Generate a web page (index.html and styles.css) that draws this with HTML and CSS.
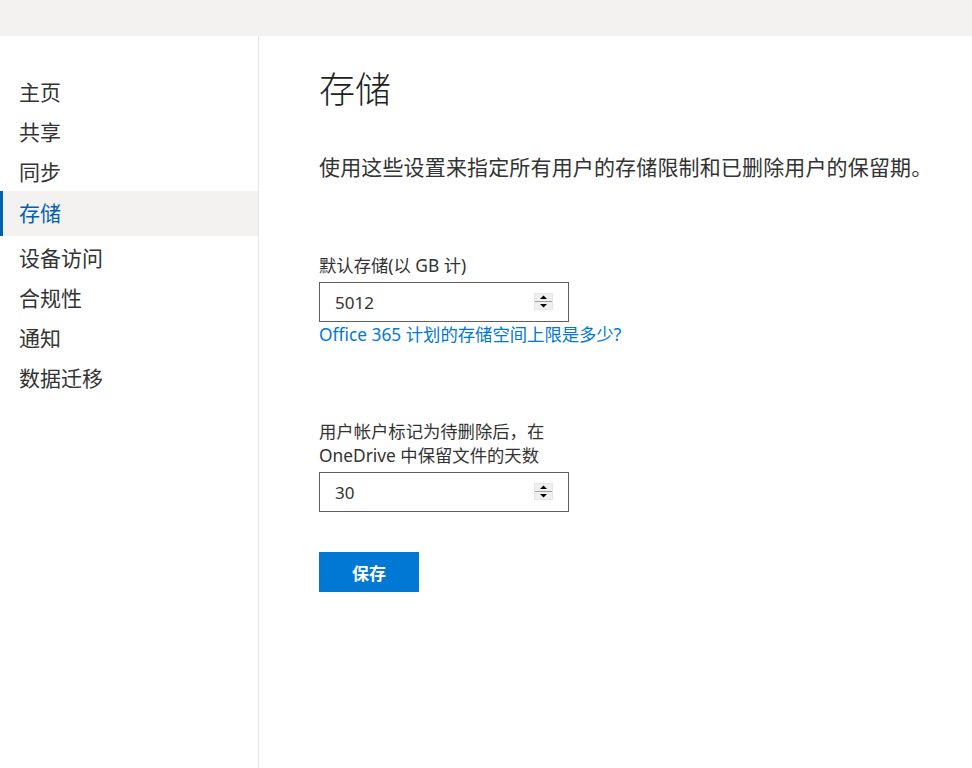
FILE: index.html
```html
<!DOCTYPE html>
<html lang="zh-CN">
<head>
<meta charset="utf-8">
<title>存储</title>
<link rel="stylesheet" href="styles.css">
</head>
<body>
<div class="topbar"></div>
<div class="layout">
  <nav class="sidebar">
    <a class="nav-item">主页</a>
    <a class="nav-item">共享</a>
    <a class="nav-item">同步</a>
    <a class="nav-item active">存储</a>
    <a class="nav-item">设备访问</a>
    <a class="nav-item">合规性</a>
    <a class="nav-item">通知</a>
    <a class="nav-item">数据迁移</a>
  </nav>
  <main class="content">
    <h1 class="title">存储</h1>
    <p class="desc">使用这些设置来指定所有用户的存储限制和已删除用户的保留期。</p>

    <div class="field field-first">
      <label class="label">默认存储(以 GB 计)</label>
      <div class="spin-input">
        <span class="value">5012</span>
        <span class="spinner">
          <svg width="19" height="17" viewBox="0 0 19 17">
            <rect x="0" y="0" width="19" height="17" fill="#e6e6e6"/>
            <rect x="1" y="1" width="17" height="7" fill="#efefef"/>
            <rect x="1" y="9" width="17" height="7" fill="#efefef"/>
            <line x1="1" y1="8.5" x2="18" y2="8.5" stroke="#a0a0a0" stroke-width="1"/>
            <polygon points="6,6 13,6 9.5,2.5" fill="#000"/>
            <polygon points="6,11 13,11 9.5,14.5" fill="#000"/>
          </svg>
        </span>
      </div>
      <a class="link">Office 365 计划的存储空间上限是多少?</a>
    </div>

    <div class="field field-second">
      <label class="label">用户帐户标记为待删除后，在<br>OneDrive 中保留文件的天数</label>
      <div class="spin-input">
        <span class="value">30</span>
        <span class="spinner">
          <svg width="19" height="17" viewBox="0 0 19 17">
            <rect x="0" y="0" width="19" height="17" fill="#e6e6e6"/>
            <rect x="1" y="1" width="17" height="7" fill="#efefef"/>
            <rect x="1" y="9" width="17" height="7" fill="#efefef"/>
            <line x1="1" y1="8.5" x2="18" y2="8.5" stroke="#a0a0a0" stroke-width="1"/>
            <polygon points="6,6 13,6 9.5,2.5" fill="#000"/>
            <polygon points="6,11 13,11 9.5,14.5" fill="#000"/>
          </svg>
        </span>
      </div>
    </div>

    <button class="save-btn">保存</button>
  </main>
</div>
</body>
</html>
```

FILE: styles.css
```css
* { box-sizing: border-box; }
html, body {
  margin: 0;
  padding: 0;
  background: #ffffff;
  font-family: "Segoe UI", "Noto Sans", "Noto Sans CJK SC", sans-serif;
  color: #333333;
}
.topbar {
  height: 36px;
  background: #f3f2f1;
}
.layout {
  display: flex;
  min-height: 732px;
}
.sidebar {
  width: 259px;
  flex: 0 0 259px;
  border-right: 1px solid #e6e6e6;
  padding-top: 36px;
  display: flex;
  flex-direction: column;
}
.nav-item {
  display: block;
  height: 40px;
  line-height: 40px;
  padding-left: 19px;
  font-size: 21px;
  color: #333333;
  text-decoration: none;
}
.nav-item.active {
  height: 45px;
  line-height: 45px;
  margin-top: -1px;
  background: #f3f2f1;
  color: #0062ad;
  border-left: 3px solid #0062ad;
  padding-left: 16px;
}
.nav-item.active + .nav-item { margin-top: 2px; }
.content {
  flex: 1;
  padding: 30px 0 0 60px;
}
.title {
  margin: 0;
  font-size: 36px;
  font-weight: 300;
  line-height: 48px;
  color: #212121;
}
.desc {
  margin: 39px 0 0;
  font-size: 21px;
  line-height: 28px;
  letter-spacing: 0.15px;
  color: #333333;
}
.field { display: flex; flex-direction: column; align-items: flex-start; }
.field-first { margin-top: 72px; }
.field-second { margin-top: 73px; }
.label {
  font-size: 17.33px;
  line-height: 24px;
  color: #333333;
}
.spin-input {
  margin-top: 5px;
  width: 250px;
  height: 40px;
  border: 1px solid #605e5c;
  display: flex;
  align-items: center;
  justify-content: space-between;
  padding: 0 15px 0 15px;
}
.value {
  font-size: 17px;
  color: #333333;
}
.spinner {
  display: flex;
  width: 19px;
  height: 17px;
  margin-top: -1px;
}
.link {
  font-size: 17.33px;
  line-height: 24px;
  color: #0078d4;
  text-decoration: none;
}
.save-btn {
  display: block;
  margin-top: 40px;
  width: 100px;
  height: 40px;
  border: none;
  background: #0078d4;
  color: #ffffff;
  font-family: "Segoe UI", "Noto Sans CJK SC", sans-serif;
  font-size: 17px;
  font-weight: 700;
  padding: 0;
}
```
